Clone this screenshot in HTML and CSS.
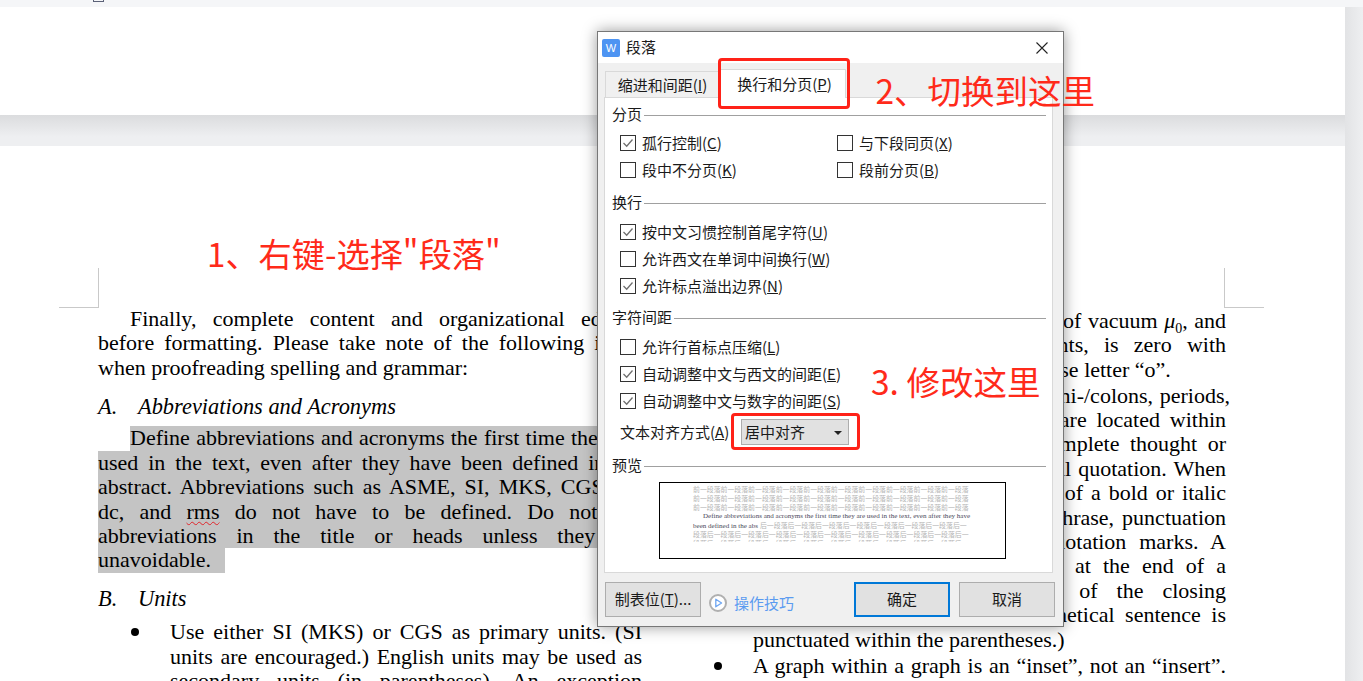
FILE: index.html
```html
<!DOCTYPE html>
<html lang="zh-CN">
<head>
<meta charset="utf-8">
<title>段落</title>
<link rel="stylesheet" href="styles.css">
</head>
<body>
<div class="top-strip"><span class="top-mark"></span></div>
<div class="workspace">
  <main class="doc">
    <div class="page-a"></div>
    <div class="page-gap"></div>
    <section class="page-b">
      <span class="crop crop-l"></span>
      <span class="crop crop-r"></span>
      <div class="columns">
        <div class="col col-left">
          <div class="ln j first">Finally, complete content and organizational editing</div>
          <div class="ln j">before formatting. Please take note of the following items</div>
          <div class="ln">when proofreading spelling and grammar:</div>
          <div class="ln head head-a"><i class="num">A.</i><i>Abbreviations and Acronyms</i></div>
          <div class="sel">
            <div class="ln j first sel-first">Define abbreviations and acronyms the first time they are</div>
            <div class="ln j mark">used in the text, even after they have been defined in the</div>
            <div class="ln j mark">abstract. Abbreviations such as ASME, SI, MKS, CGS, sc,</div>
            <div class="ln j mark">dc, and <span class="spell">rms</span> do not have to be defined. Do not use</div>
            <div class="ln j mark">abbreviations in the title or heads unless they are</div>
            <div class="ln mark last-sel">unavoidable.</div>
          </div>
          <div class="ln head head-b"><i class="num">B.</i><i>Units</i></div>
          <div class="ln j bullet bullet-first">Use either SI (MKS) or CGS as primary units. (SI</div>
          <div class="ln j indent">units are encouraged.) English units may be used as</div>
          <div class="ln j indent">secondary units (in parentheses). An exception</div>
        </div>
        <div class="col col-right">
          <div class="ln j">The subscript for the permeability of vacuum <i>μ</i><sub>0</sub>, and</div>
          <div class="ln j">other common scientific constants, is zero with</div>
          <div class="ln">subscript formatting, not a lowercase letter “o”.</div>
          <div class="ln j para-gap over">In American English, commas, semi-/colons, periods,</div>
          <div class="ln j">question and exclamation marks are located within</div>
          <div class="ln j">quotation marks only when a complete thought or</div>
          <div class="ln j">name is cited, such as a title or full quotation. When</div>
          <div class="ln j">quotation marks are used, instead of a bold or italic</div>
          <div class="ln j">typeface, to highlight a word or phrase, punctuation</div>
          <div class="ln j">should appear outside of the quotation marks. A</div>
          <div class="ln j">parenthetical phrase or statement at the end of a</div>
          <div class="ln j">sentence is punctuated outside of the closing</div>
          <div class="ln j">parenthesis (like this). (A parenthetical sentence is</div>
          <div class="ln">punctuated within the parentheses.)</div>
          <div class="ln j bullet-r para-gap">A graph within a graph is an “inset”, not an “insert”.</div>
        </div>
      </div>
    </section>
  </main>
  <div class="side-strip"></div>
</div>

<div class="note note-1">1、右键-选择"段落"</div>
<div class="note note-2">2、切换到这里</div>
<div class="note note-3">3. 修改这里</div>

<div class="dialog">
  <header class="titlebar">
    <span class="app-icon">W</span>
    <span class="title">段落</span>
    <svg class="close" viewBox="0 0 12 12" width="12" height="12"><path d="M0.5 0.5 L11.5 11.5 M11.5 0.5 L0.5 11.5"/></svg>
  </header>
  <nav class="tabs">
    <span class="tab">缩进和间距(<u>I</u>)</span>
    <span class="tab tab-on">换行和分页(<u>P</u>)</span>
  </nav>
  <div class="panel">
    <div class="legend legend-first"><span>分页</span></div>
    <div class="grid2">
      <label class="row"><span class="box on"><svg viewBox="0 0 14 14"><path d="M2.5 7 L5.7 10.2 L11.5 3.5"/></svg></span>孤行控制(<u>C</u>)</label>
      <label class="row"><span class="box"></span>与下段同页(<u>X</u>)</label>
      <label class="row"><span class="box"></span>段中不分页(<u>K</u>)</label>
      <label class="row"><span class="box"></span>段前分页(<u>B</u>)</label>
    </div>
    <div class="legend"><span>换行</span></div>
    <div class="stack">
      <label class="row"><span class="box on"><svg viewBox="0 0 14 14"><path d="M2.5 7 L5.7 10.2 L11.5 3.5"/></svg></span>按中文习惯控制首尾字符(<u>U</u>)</label>
      <label class="row"><span class="box"></span>允许西文在单词中间换行(<u>W</u>)</label>
      <label class="row"><span class="box on"><svg viewBox="0 0 14 14"><path d="M2.5 7 L5.7 10.2 L11.5 3.5"/></svg></span>允许标点溢出边界(<u>N</u>)</label>
    </div>
    <div class="legend"><span>字符间距</span></div>
    <div class="stack">
      <label class="row"><span class="box"></span>允许行首标点压缩(<u>L</u>)</label>
      <label class="row"><span class="box on"><svg viewBox="0 0 14 14"><path d="M2.5 7 L5.7 10.2 L11.5 3.5"/></svg></span>自动调整中文与西文的间距(<u>E</u>)</label>
      <label class="row"><span class="box on"><svg viewBox="0 0 14 14"><path d="M2.5 7 L5.7 10.2 L11.5 3.5"/></svg></span>自动调整中文与数字的间距(<u>S</u>)</label>
    </div>
    <div class="align-row">
      <span class="align-label">文本对齐方式(<u>A</u>)</span>
      <span class="select">居中对齐<span class="caret"></span></span>
    </div>
    <div class="legend legend-preview"><span>预览</span></div>
    <div class="preview">
      <div class="preview-inner">
        <div class="pv">前一段落前一段落前一段落前一段落前一段落前一段落前一段落前一段落前一段落前一段落</div>
        <div class="pv">前一段落前一段落前一段落前一段落前一段落前一段落前一段落前一段落前一段落前一段落</div>
        <div class="pv">前一段落前一段落前一段落前一段落前一段落前一段落前一段落前一段落前一段落前一段落</div>
        <div class="pv-text pv-text-1">Define abbreviations and acronyms the first time they are used in the text, even after they have</div>
        <div class="pv-mixed"><span class="pv-text">been defined in the abs</span><span class="pv-tail">后一段落后一段落后一段落后一段落后一段落后一段落后一段落后一</span></div>
        <div class="pv">段落后一段落后一段落后一段落后一段落后一段落后一段落后一段落后一段落后一段落后一</div>
        <div class="pv">段落后一段落后一段落后一段落后一段落后一段落后一段落后一段落后一段落后一段落后一</div>
      </div>
    </div>
  </div>
  <footer class="footer">
    <span class="btn btn-tabs">制表位(<u>T</u>)...</span>
    <span class="tips">
      <svg viewBox="0 0 18 18" width="18" height="18"><circle class="tips-ring" cx="9" cy="9" r="8"/><path class="tips-play" d="M6.8 5.2 L12.6 9 L6.8 12.8 Z"/></svg>
      操作技巧
    </span>
    <span class="btn btn-ok">确定</span>
    <span class="btn btn-cancel">取消</span>
  </footer>
</div>

<div class="redbox redbox-tab"></div>
<div class="redbox redbox-select"></div>
</body>
</html>
```

FILE: styles.css
```css
* { box-sizing: border-box; }
html, body { margin: 0; padding: 0; }
body {
  height: 681px;
  overflow: hidden;
  background: #eeeff1;
  font-family: "Liberation Serif", serif;
  color: #000;
}
.top-strip { height: 7px; background: #f5f6f8; padding-left: 93px; }
.top-mark {
  display: block;
  width: 11px;
  height: 2px;
  border: 1px solid #5c6278;
  border-top: 0;
}
.workspace { display: flex; height: 674px; }
.doc { width: 1345px; }
.side-strip { width: 18px; background: linear-gradient(to right, #e2e3e5, #eeeff1); }
.page-a { height: 108px; background: #fff; }
.page-gap { height: 31px; background: linear-gradient(to bottom, #dbdcde, #eeeff1 70%); }
.page-b {
  position: relative;
  height: 535px;
  overflow: hidden;
  background: #fff;
  padding-top: 160.8px;
}
.crop { position: absolute; top: 122px; width: 40px; height: 40px; border-bottom: 1px solid #c9c9c9; }
.crop-l { left: 59px; border-right: 1px solid #c9c9c9; }
.crop-r { left: 1224px; border-left: 1px solid #c9c9c9; }

.columns { display: flex; gap: 111px; padding-left: 98px; }
.col-left { width: 544px; flex: none; }
.col-right { width: 473px; flex: none; padding-top: 2px; }
.ln {
  height: 24.4px;
  line-height: 24.4px;
  font-size: 22px;
}
.j { text-align: justify; text-align-last: justify; }
.first { margin-left: 32px; }
.over { margin-right: -4px; }
.head { display: flex; font-size: 22.4px; }
.num { width: 40px; }
.head-a { margin-top: 15.4px; }
.head-b { margin-top: 14.6px; }
.sel { margin-top: 6.6px; }
.sel-first, .mark { background: #c4c4c4; }
.last-sel { width: 127px; }
.spell { text-decoration: underline wavy #e0242a 1px; text-underline-offset: 2px; }
.indent { margin-left: 72px; }
.bullet { margin-left: 72px; margin-top: 8.6px; position: relative; }
.bullet::before {
  content: "";
  position: absolute;
  left: -39px;
  top: 8px;
  width: 8px;
  height: 8px;
  border-radius: 50%;
  background: #000;
}
.bullet-r { position: relative; }
.bullet-r::before {
  content: "";
  position: absolute;
  left: -39px;
  top: 8px;
  width: 8px;
  height: 8px;
  border-radius: 50%;
  background: #000;
}
.para-gap { margin-top: 1.7px; }
sub { font-size: 14px; line-height: 0; }

.note {
  position: absolute;
  color: #ff2a1a;
  font-family: "Noto Sans CJK SC", "Noto Sans", sans-serif;
  font-weight: 400;
  font-size: 33.5px;
  line-height: 44px;
  white-space: nowrap;
  z-index: 3;
}
.note-1 { left: 207px; top: 231px; font-size: 33.2px; }
.note-2 { left: 875.5px; top: 68px; }
.note-3 { left: 871px; top: 359px; font-size: 33.5px; }

.dialog {
  position: absolute;
  left: 597px;
  top: 31px;
  width: 467px;
  height: 596px;
  display: flex;
  flex-direction: column;
  background: #f0f0f0;
  border: 1px solid #777;
  box-shadow: 0 0 14px rgba(0, 0, 0, .4);
  font-family: "Noto Sans CJK SC", "Noto Sans", sans-serif;
  font-size: 15px;
  color: #1a1a1a;
  z-index: 2;
}
.titlebar {
  height: 31px;
  flex: none;
  display: flex;
  align-items: center;
  padding: 0 15px 0 4px;
  background: #fff;
}
.app-icon {
  width: 18px;
  height: 18px;
  border-radius: 2px;
  background: #4d94f2;
  color: #fff;
  font: 400 11px/18px "Liberation Sans", sans-serif;
  text-align: center;
}
.title { margin-left: 6px; flex: 1; padding-bottom: 2px; }
.close { fill: none; stroke: #222; stroke-width: 1.1; }
.tabs {
  height: 34px;
  flex: none;
  display: flex;
  align-items: flex-end;
  padding-left: 7px;
}
.tab {
  width: 115px;
  height: 26px;
  line-height: 26px;
  text-align: center;
  white-space: nowrap;
  background: #f0f0f0;
  border: 1px solid #d9d9d9;
  border-bottom: 0;
}
.tab-on {
  width: 126px;
  height: 29px;
  line-height: 28px;
  padding-left: 3px;
  background: #fff;
  margin-bottom: -1px;
  position: relative;
  z-index: 1;
}
.panel {
  width: 449px;
  height: 476px;
  flex: none;
  margin-left: 6px;
  padding: 0 6px 0 7px;
  background: #fff;
  border: 1px solid #d9d9d9;
}
.legend {
  height: 20px;
  margin-top: 8.5px;
  display: flex;
  align-items: center;
  gap: 2px;
}
.legend span { line-height: 18px; padding-bottom: 2px; }
.legend::after { content: ""; flex: 1; height: 1px; background: #a0a0a0; }
.legend-first { margin-top: 7px; }
.legend-preview { margin-top: 11px; }
.grid2 { display: grid; grid-template-columns: 217px 1fr; margin-top: 4.5px; padding: 0 0 1px 8px; }
.stack { margin-top: 5.5px; padding-left: 8px; }
.row { height: 27px; display: flex; align-items: flex-start; line-height: 25px; white-space: nowrap; }
.box {
  width: 16px;
  height: 16px;
  margin: 5.5px 6px 0 0;
  flex: none;
  border: 1px solid #333;
  background: #fff;
}
.box svg { display: block; width: 14px; height: 14px; fill: none; stroke: #707070; stroke-width: 1.3; }
.align-row { display: flex; align-items: center; height: 26px; margin-top: 4.5px; padding-left: 8px; }
.align-label { width: 121px; flex: none; white-space: nowrap; padding-bottom: 2px; }
.select {
  position: relative;
  width: 108px;
  height: 26px;
  line-height: 23px;
  padding-left: 3px;
  background: #e1e1e1;
  border: 1px solid #adadad;
}
.caret {
  position: absolute;
  right: 6px;
  top: 11px;
  border-left: 4px solid transparent;
  border-right: 4px solid transparent;
  border-top: 4px solid #222;
}
.preview {
  width: 347px;
  height: 77px;
  margin: 6px 0 0 47px;
  border: 1px solid #000;
  background: #fff;
}
.preview-inner { height: 59px; padding: 2px 0 0 33px; overflow: hidden; }
.pv, .pv-mixed { height: 9px; line-height: 9px; font-size: 6.9px; white-space: nowrap; }
.pv { color: #b5b5b5; font-family: "Noto Sans CJK SC", sans-serif; }
.pv-text {
  font-family: "Liberation Serif", serif;
  color: #4a4a5a;
  font-size: 7.05px;
  line-height: 9px;
  height: 9px;
  white-space: nowrap;
}
.pv-text-1 { padding-left: 10px; }
.pv-tail { color: #b5b5b5; font-family: "Noto Sans CJK SC", sans-serif; margin-left: 2px; }

.footer { flex: 1; display: flex; align-items: flex-start; padding: 9px 8px 0 7px; }
.btn {
  width: 96px;
  height: 35px;
  line-height: 31px;
  text-align: center;
  background: #e1e1e1;
  border: 1px solid #adadad;
  white-space: nowrap;
}
.tips {
  display: flex;
  align-items: center;
  gap: 7px;
  margin-left: 8px;
  height: 41px;
  color: #5b9bf0;
  font-size: 15px;
  flex: 1;
}
.tips-ring { fill: #fff; stroke: #b0b0b0; stroke-width: 2; }
.tips-play { fill: none; stroke: #6ea6f2; stroke-width: 1.3; stroke-linejoin: round; }
.btn-ok { border: 2px solid #0078d7; line-height: 29px; }
.btn-cancel { margin-left: 9px; }

.redbox {
  position: absolute;
  border: 3px solid #ff2218;
  border-radius: 4px;
  z-index: 3;
}
.redbox-tab { left: 718px; top: 58px; width: 132px; height: 51px; }
.redbox-select { left: 731px; top: 413px; width: 129px; height: 37px; }
```
